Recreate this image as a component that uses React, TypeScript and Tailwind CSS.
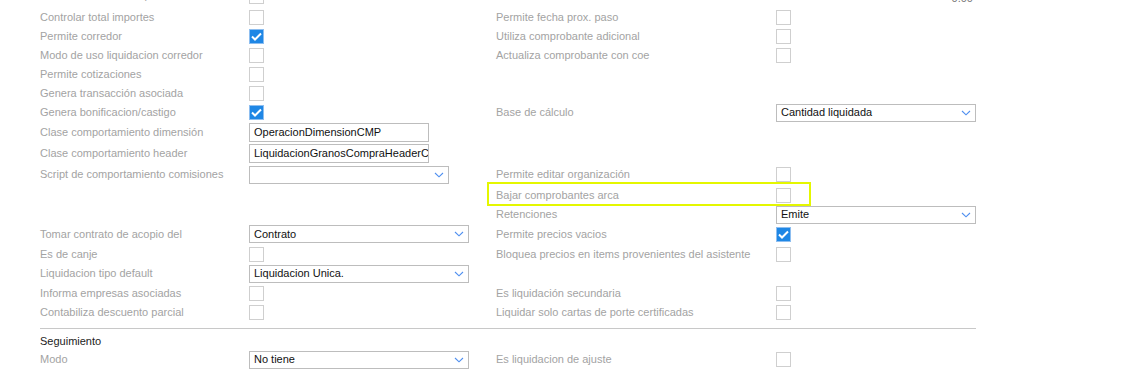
import React from "react";

const Label = ({ children }: { children?: React.ReactNode }) => (
  <div className="text-[11px] leading-none text-[#a3a3a3] whitespace-nowrap">{children}</div>
);

const Check = ({ checked }: { checked?: boolean }) =>
  checked ? (
    <div className="w-[15px] h-[15px] bg-[#1f87e5] border border-[#8dbef0] flex items-center justify-center">
      <svg width="11" height="9" viewBox="0 0 11 9">
        <path d="M1 4.5 L4 7.5 L10 1.5" fill="none" stroke="#fff" strokeWidth="2" />
      </svg>
    </div>
  ) : (
    <div className="w-[15px] h-[15px] bg-white border border-[#cfcfcf]" />
  );

const TextBox = ({ value }: { value: string }) => (
  <div className="w-[180px] h-[19px] border border-[#bdbdbd] bg-white pl-[4px] pr-[1px] flex items-center overflow-hidden">
    <span className="text-[11px] text-[#111] whitespace-nowrap">{value}</span>
  </div>
);

const Select = ({ value, width }: { value?: string; width: string }) => (
  <div className={`${width} h-[18px] border border-[#bdbdbd] bg-white pl-[4px] pr-[4px] flex items-center justify-between`}>
    <span className="text-[11px] text-[#111] whitespace-nowrap">{value}</span>
    <svg width="10" height="6" viewBox="0 0 10 6">
      <path d="M1 1 L5 4.8 L9 1" fill="none" stroke="#4f8ff0" strokeWidth="1.1" />
    </svg>
  </div>
);

const Row = ({ h, children }: { h: string; children: React.ReactNode }) => (
  <div className={`grid grid-cols-[209px_247px_280px_200px] items-center ${h}`}>{children}</div>
);

export default function App() {
  return (
    <div className="w-[1147px] h-[372px] overflow-hidden bg-white font-['Liberation_Sans',Arial,sans-serif]">
      <div className="pl-10 mt-[-11px]">
        {/* row partly scrolled out of view */}
        <div className="grid grid-cols-[209px_247px_280px_200px] items-start h-[19px]">
          <div className="mt-[1px]">
            <Label>Controlar cantidades por item</Label>
          </div>
          <Check />
          <div />
          <div className="mt-[4px] text-right pr-[3px] text-[11px] leading-none text-[#777]">0.00</div>
        </div>
        <Row h="h-[19px]">
          <Label>Controlar total importes</Label>
          <Check />
          <Label>Permite fecha prox. paso</Label>
          <Check />
        </Row>
        <Row h="h-[19px]">
          <Label>Permite corredor</Label>
          <Check checked />
          <Label>Utiliza comprobante adicional</Label>
          <Check />
        </Row>
        <Row h="h-[19px]">
          <Label>Modo de uso liquidacion corredor</Label>
          <Check />
          <Label>Actualiza comprobante con coe</Label>
          <Check />
        </Row>
        <Row h="h-[19px]">
          <Label>Permite cotizaciones</Label>
          <Check />
          <div />
          <div />
        </Row>
        <Row h="h-[19px]">
          <Label>Genera transacción asociada</Label>
          <Check />
          <div />
          <div />
        </Row>
        <Row h="h-[19px]">
          <Label>Genera bonificacion/castigo</Label>
          <Check checked />
          <Label>Base de cálculo</Label>
          <Select value="Cantidad liquidada" width="w-[200px]" />
        </Row>
        <Row h="h-[21px]">
          <Label>Clase comportamiento dimensión</Label>
          <TextBox value="OperacionDimensionCMP" />
          <div />
          <div />
        </Row>
        <Row h="h-[21px]">
          <Label>Clase comportamiento header</Label>
          <TextBox value="LiquidacionGranosCompraHeaderC" />
          <div />
          <div />
        </Row>
        <Row h="h-[21px]">
          <Label>Script de comportamiento comisiones</Label>
          <Select width="w-[200px]" />
          <Label>Permite editar organización</Label>
          <Check />
        </Row>
        <Row h="h-[20px]">
          <div />
          <div />
          <div className="relative col-span-2 grid grid-cols-[280px_200px] items-center h-[20px]">
            <Label>Bajar comprobantes arca</Label>
            <Check />
            <div className="absolute left-[-9px] top-[-3px] w-[324px] h-[24px] border-2 border-[#e4f700]" />
          </div>
        </Row>
        <Row h="h-[19px]">
          <div />
          <div />
          <Label>Retenciones</Label>
          <Select value="Emite" width="w-[200px]" />
        </Row>
        <Row h="h-[20px]">
          <Label>Tomar contrato de acopio del</Label>
          <Select value="Contrato" width="w-[220px]" />
          <Label>Permite precios vacios</Label>
          <Check checked />
        </Row>
        <Row h="h-[20px]">
          <Label>Es de canje</Label>
          <Check />
          <Label>Bloquea precios en items provenientes del asistente</Label>
          <Check />
        </Row>
        <Row h="h-[19px]">
          <Label>Liquidacion tipo default</Label>
          <Select value="Liquidacion Unica." width="w-[220px]" />
          <div />
          <div />
        </Row>
        <Row h="h-[20px]">
          <Label>Informa empresas asociadas</Label>
          <Check />
          <Label>Es liquidación secundaria</Label>
          <Check />
        </Row>
        <Row h="h-[19px]">
          <Label>Contabiliza descuento parcial</Label>
          <Check />
          <Label>Liquidar solo cartas de porte certificadas</Label>
          <Check />
        </Row>
        <div className="mt-[6px] w-[936px] border-t border-[#c8c8c8]" />
        <div className="h-[21px] pt-[4px] flex items-center text-[11px] text-[#222]">Seguimiento</div>
        <Row h="h-[19px]">
          <Label>Modo</Label>
          <Select value="No tiene" width="w-[220px]" />
          <Label>Es liquidacion de ajuste</Label>
          <Check />
        </Row>
      </div>
    </div>
  );
}
